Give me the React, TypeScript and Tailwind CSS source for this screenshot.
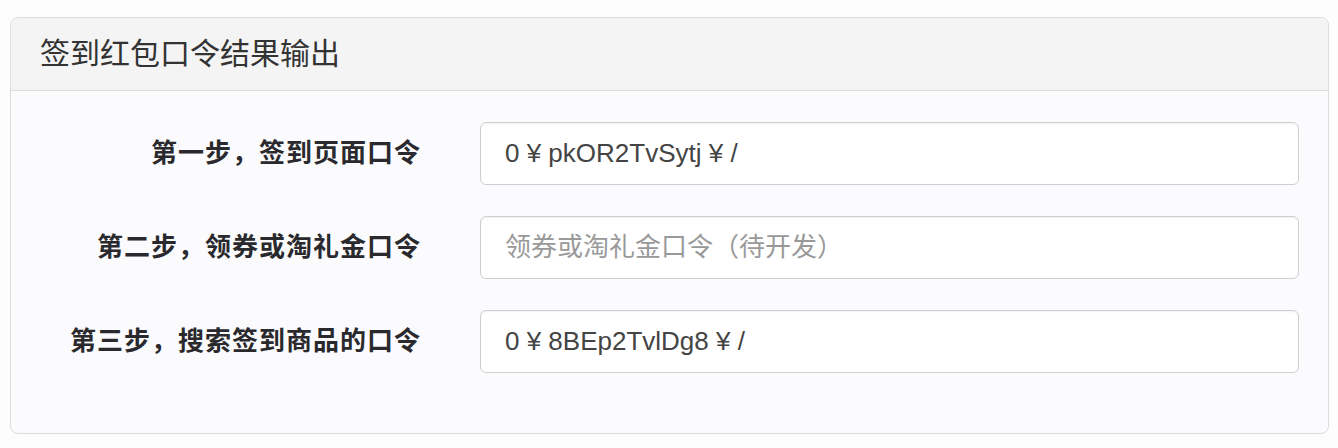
import React from 'react';

const rows = [
  { label: '第一步，签到页面口令', value: '0 ¥ pkOR2TvSytj ¥ /', placeholder: '' },
  { label: '第二步，领券或淘礼金口令', value: '', placeholder: '领券或淘礼金口令（待开发）' },
  { label: '第三步，搜索签到商品的口令', value: '0 ¥ 8BEp2TvlDg8 ¥ /', placeholder: '' },
];

const cjk = "font-['Liberation_Sans','Noto_Sans_CJK_SC',sans-serif]";

export default function App() {
  return (
    <div className={`w-[1338px] h-[448px] bg-[#fdfdfd] pt-[17px] pl-[10px] pr-[9px] ${cjk}`}>
      <div className="h-[417px] rounded-[8px] border border-[#dcdcdc] bg-[#fbfbfd] overflow-hidden">
        <div className="h-[73px] bg-[#f4f4f5] border-b border-[#dddddd] flex items-center pl-[29px]">
          <h3 className="text-[30px] text-[#333] leading-none">签到红包口令结果输出</h3>
        </div>
        <div className="pt-[31px] flex flex-col gap-[31px]">
          {rows.map((r) => (
            <div key={r.label} className="flex items-center">
              <label className="w-[410px] text-right text-[26px] font-bold text-[#2a2a2e] tracking-[1px]">
                {r.label}
              </label>
              <input
                readOnly
                defaultValue={r.value}
                placeholder={r.placeholder}
                className="ml-[59px] w-[819px] h-[63px] rounded-[6px] border border-[#cfcfcf] bg-white px-[24px] text-[26px] text-[#444] placeholder:text-[#999] shadow-[inset_0_1px_2px_rgba(0,0,0,0.06)] outline-none"
              />
            </div>
          ))}
        </div>
      </div>
    </div>
  );
}
